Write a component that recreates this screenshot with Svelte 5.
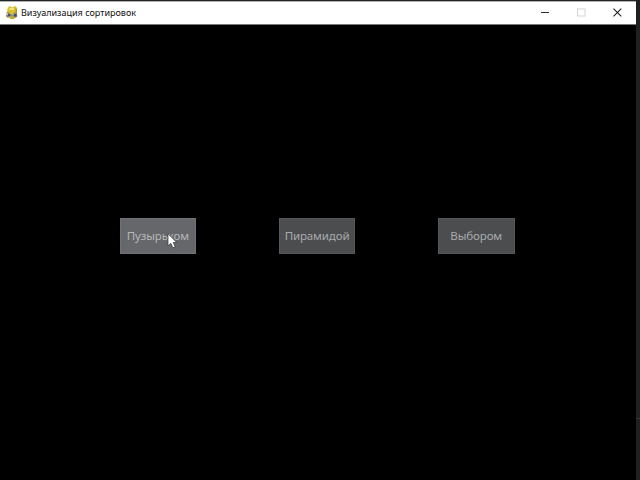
<script>
  const sorts = [
    { label: 'Пузырьком', hovered: true },
    { label: 'Пирамидой', hovered: false },
    { label: 'Выбором', hovered: false }
  ];
</script>

<div class="desktop">
  <main class="window">
    <header class="titlebar">
      <svg class="snake" width="14" height="16" viewBox="0 0 14 16">
        <path d="M2.5 3.5 L4 1.2 H5.5 L6.5 2.2 H8 L9 1.2 H11 L12 3.5 V7 L11.2 10 L9.5 13.5 H5 L3 11 L2 7Z" fill="#d6c130" />
        <path d="M4.5 3 H9 V5 H4.5Z" fill="#f1e66e" />
        <path d="M10.5 3 L12 4 V8 H10.5Z" fill="#ae982a" />
        <path d="M1.5 7.5 L3.5 7 L5 9 H8 L9.5 7.5 L12 8 L12.3 11.5 L10.5 13 L8.5 11.5 H5 L3 13 L1 11.5Z" fill="#8c8873" />
        <path d="M3 9 H5 V11 H3Z M9 9 H11.5 V11.5 H9Z" fill="#4d5056" />
        <path d="M1 8 H3 V10 H1Z M7 9 H8.5 V10 H7Z" fill="#c6c4b6" />
        <path d="M5 12 H9.5 L9 14 H5.5Z" fill="#bda937" />
      </svg>
      <h1>Визуализация сортировок</h1>
      <div class="controls">
        <svg width="36" height="22" viewBox="0 0 36 22"><path d="M14 10.5 H22" stroke="#333" /></svg>
        <svg width="36" height="22" viewBox="0 0 36 22"><rect x="14.5" y="7" width="7.5" height="7" fill="none" stroke="#d4d4d4" /></svg>
        <svg width="36" height="22" viewBox="0 0 36 22"><path d="M14.5 6.6 L22.3 14.4 M22.3 6.6 L14.5 14.4" stroke="#222" stroke-width="1.1" /></svg>
      </div>
    </header>
    <section class="choices">
      {#each sorts as sort}
        <button class:hovered={sort.hovered}>
          <span>{sort.label}</span>
          {#if sort.hovered}
            <svg class="cursor" width="12" height="17" viewBox="0 0 12 17">
              <path d="M1 0.8 V12.8 L3.8 10.3 L5.9 14.8 L8.2 13.8 L6.2 9.5 H9.8Z" fill="#fff" stroke="#333" stroke-width=".7" />
            </svg>
          {/if}
        </button>
      {/each}
    </section>
  </main>
  <aside><div></div></aside>
</div>

<style>
  :global(body) { background: #000; overflow: hidden; }
  .desktop { display: flex; width: 640px; height: 480px; background: #000; }
  .window {
    display: flex;
    flex-direction: column;
    width: 636px;
    border-top: 1px solid #242424;
    box-sizing: border-box;
  }
  .titlebar {
    display: flex;
    align-items: center;
    box-sizing: border-box;
    height: 24px;
    padding: 0 1px 0 5px;
    background: #fff;
    border-top: 1px solid #b0b0b0;
    border-bottom: 1px solid #777;
  }
  h1 {
    margin: 0 0 0 2px;
    font: 400 9px/12px "Noto Sans", "Open Sans", sans-serif;
    color: #111;
    white-space: nowrap;
  }
  .controls { display: flex; margin-left: auto; }
  svg { display: block; flex: none; }
  .choices {
    display: flex;
    gap: 82.5px;
    padding: 193px 0 0 119.5px;
  }
  button {
    position: relative;
    display: flex;
    align-items: center;
    justify-content: center;
    box-sizing: border-box;
    width: 76.7px;
    height: 36px;
    padding: 0 0 1px;
    border: 1px solid #57585a;
    border-radius: 0;
    background: #4c4d4f;
    color: #a8aaad;
    font: 400 11.5px/16px "Noto Sans", "Open Sans", sans-serif;
    letter-spacing: -.12px;
  }
  button.hovered { background: #65676a; border-color: #707274; color: #b5b7ba; }
  .cursor { position: absolute; left: 46px; top: 14px; }
  aside { width: 4px; background: #202020; }
  aside div { height: 418px; border-bottom: 1px solid #383838; }
</style>
